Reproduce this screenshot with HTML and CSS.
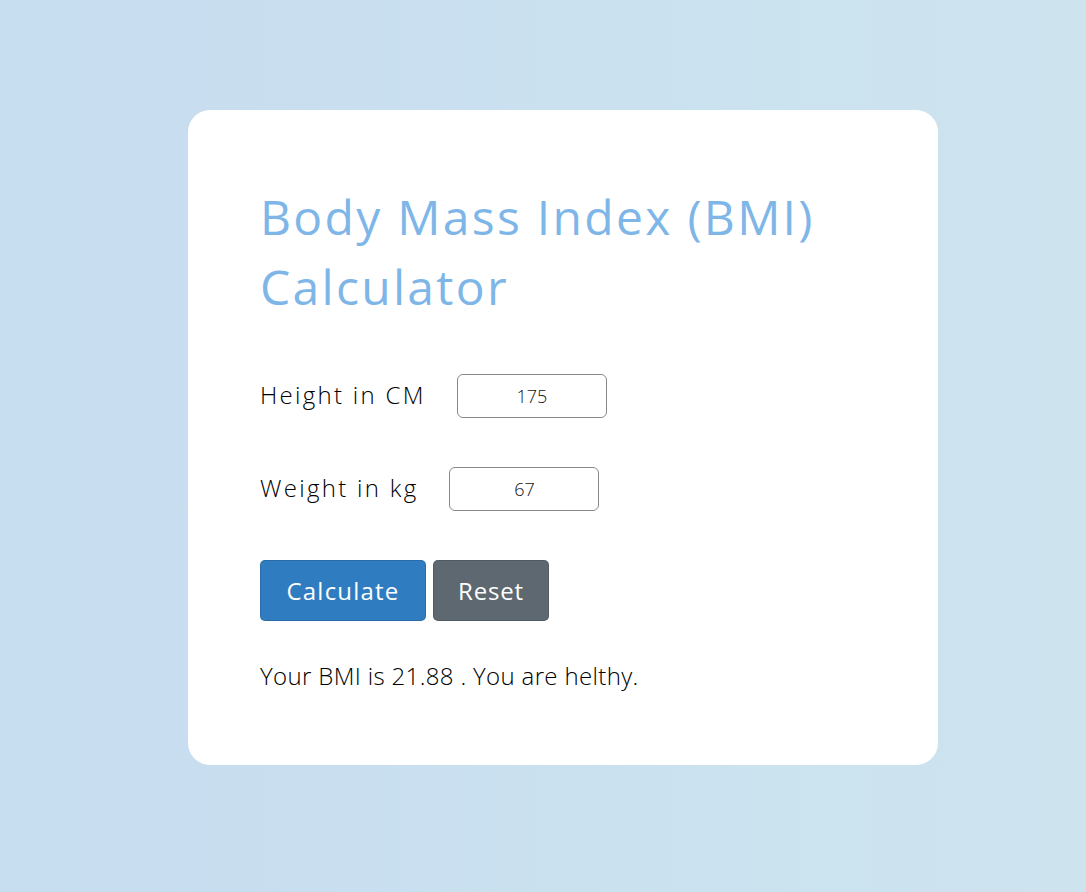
FILE: index.html
```html
<!DOCTYPE html>
<html lang="en">
<head>
<meta charset="utf-8">
<title>BMI Calculator</title>
<link rel="stylesheet" href="styles.css">
</head>
<body>
<main class="card">
  <h1 class="title">Body Mass Index (BMI) Calculator</h1>
  <div class="row">
    <label class="label" for="h">Height in CM</label>
    <input class="field" id="h" type="text" value="175">
  </div>
  <div class="row">
    <label class="label" for="w">Weight in kg</label>
    <input class="field field-w" id="w" type="text" value="67">
  </div>
  <div class="actions">
    <button class="btn btn-primary" type="button">Calculate</button>
    <button class="btn btn-secondary" type="button">Reset</button>
  </div>
  <p class="result">Your BMI is 21.88 . You are helthy.</p>
</main>
</body>
</html>
```
FILE: styles.css
```css
html, body {
  margin: 0;
  height: 100%;
}
body {
  background: linear-gradient(to right, #c7ddf0, #cde4ef);
  font-family: "Open Sans", "DejaVu Sans", sans-serif;
  padding: 110px 0 0 188px;
  box-sizing: border-box;
}
.card {
  width: 750px;
  height: 655px;
  box-sizing: border-box;
  background: #fff;
  border-radius: 22px;
  padding: 72px 72px 0 72px;
}
.title {
  margin: 0;
  font-size: 48px;
  line-height: 70px;
  font-weight: 400;
  letter-spacing: 2.3px;
  color: #7eb6e8;
  width: 600px;
}
.row {
  display: flex;
  align-items: center;
  gap: 31px;
  margin-top: 52px;
}
.row + .row {
  margin-top: 49px;
}
.label {
  font-size: 24px;
  font-weight: 300;
  letter-spacing: 2.3px;
  color: #000;
  position: relative;
  top: -2px;
}
.field {
  width: 150px;
  height: 44px;
  box-sizing: border-box;
  border: 1px solid #8a8a8a;
  border-radius: 6px;
  text-align: center;
  font-family: inherit;
  font-size: 18px;
  font-weight: 300;
  color: #111;
  padding: 0;
}
.actions {
  display: flex;
  gap: 7px;
  margin-top: 49px;
}
.btn {
  height: 61px;
  border: 1px solid rgba(0,0,0,0.12);
  border-radius: 5px;
  color: #fff;
  font-family: inherit;
  font-size: 24px;
  letter-spacing: 1.2px;
  padding: 0;
}
.btn-primary {
  width: 166px;
  background: #2f7dc0;
}
.btn-secondary {
  width: 116px;
  background: #5e6870;
  letter-spacing: 0.8px;
}
.result {
  margin: 37px 0 0;
  font-size: 24px;
  font-weight: 300;
  line-height: 36px;
  letter-spacing: 0.35px;
  color: #000;
}
```
